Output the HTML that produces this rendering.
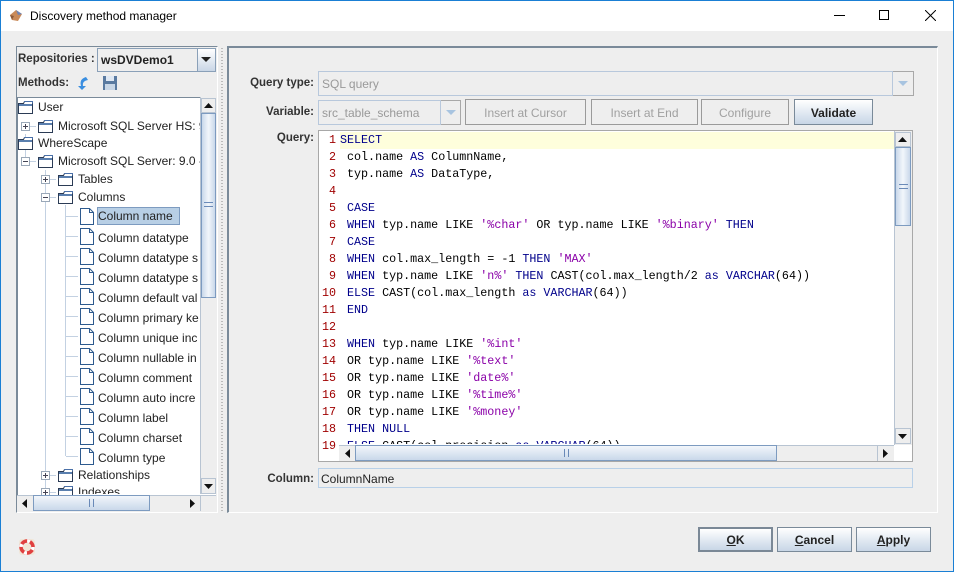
<!DOCTYPE html>
<html><head><meta charset="utf-8"><style>
*{box-sizing:border-box;margin:0;padding:0}
body{width:954px;height:572px;background:#eeeeee;font-family:"Liberation Sans",sans-serif;font-size:12px;color:#222;position:relative;overflow:hidden}
.a{position:absolute}
.lbl{position:absolute;font-weight:bold;color:#333;text-align:right;font-size:11.5px}
.btn{position:absolute;border:1px solid #9a9a9a;background:#eeeeee;color:#a0a0a0;font-size:12px;text-align:center;line-height:26px}
.bb{position:absolute;border:1px solid #7a8a99;background:linear-gradient(#ffffff,#dde6f0 60%,#c8d6e6);color:#222;font-weight:bold;text-align:center;font-size:12px}
.t{position:absolute;font-size:12px;color:#222;white-space:nowrap;line-height:16px}
.code{position:absolute;left:340px;font-family:"Liberation Mono",monospace;font-size:11.7px;white-space:pre;line-height:17px;color:#000}
.num{position:absolute;width:22px;text-align:right;left:314px;font-family:"Liberation Mono",monospace;font-size:11.7px;line-height:17px;color:#a00000}
.k{color:#00008b}.s{color:#8a00a8}
.vl{position:absolute;width:1px;background:#c3d1e2}
</style></head><body>
<div class="a" style="left:0;top:0;width:954px;height:572px;border:1px solid #1a7fd4;border-top:none"></div>
<div class="a" style="left:0;top:0;width:954px;height:31px;background:#fff;border:1px solid #1a7fd4;border-bottom:none"></div>
<svg class="a" style="left:8px;top:7px" width="16" height="16" viewBox="0 0 16 16"><path d="M2 8 L8 3 L14 7 L10 14 L4 13Z" fill="#c98a5a"/><path d="M8 3 L14 7 L10 8Z" fill="#6c84b8"/><path d="M2 8 L6 9 L4 13Z" fill="#8c5a3a"/></svg>
<div class="t" style="left:30px;top:8px;color:#000;font-size:12px">Discovery method manager</div>
<div class="a" style="left:834px;top:15px;width:11px;height:1px;background:#000"></div>
<div class="a" style="left:879px;top:10px;width:10px;height:10px;border:1px solid #000"></div>
<svg class="a" style="left:925px;top:10px" width="11" height="11"><path d="M0 0L11 11M11 0L0 11" stroke="#000" stroke-width="1"/></svg>

<div class="a" style="left:16px;top:46px;width:202px;height:467px;border:1px solid #7a8a99;border-right-color:#fff;border-bottom-color:#fff"></div>
<div class="lbl" style="left:18px;top:53px;text-align:left">Repositories :</div>
<div class="a" style="left:97px;top:48px;width:119px;height:24px;border:1px solid #8aa0b8;background:#eeeeee"></div>
<div class="t" style="left:101px;top:52px;font-weight:bold">wsDVDemo1</div>
<div class="a" style="left:197px;top:49px;width:18px;height:22px;background:linear-gradient(#fff,#c9d6e6);border-left:1px solid #8aa0b8"></div>
<svg class="a" style="left:201px;top:57px" width="10" height="6"><path d="M0 0H10L5 5Z" fill="#222"/></svg>
<div class="lbl" style="left:18px;top:77px;text-align:left">Methods:</div>
<svg class="a" style="left:76px;top:75px" width="16" height="16"><path d="M10 2 Q3 4 5 11 L2 11 L6 15 L10 11 L7 11 Q6 6 12 5Z" fill="#3a8ee0"/></svg>
<svg class="a" style="left:102px;top:75px" width="16" height="16"><rect x="1" y="1" width="14" height="14" fill="#5a7aa0"/><rect x="4" y="1" width="8" height="5" fill="#dfe8f3"/><rect x="3" y="9" width="10" height="6" fill="#c8d6e6"/></svg>
<div class="a" style="left:17px;top:97px;width:199px;height:414px;background:#fff;border:1px solid #7a8a99;border-right:none;border-bottom:none"></div>
<div class="vl" style="left:25px;top:134px;height:29px"></div>
<div class="vl" style="left:45px;top:170px;height:325px"></div>
<div class="vl" style="left:65px;top:205px;height:251px"></div>
<svg width="0" height="0" style="position:absolute"><defs>
<g id="fo"><path d="M0.5 3.5h5l1-2h8v12h-14z" fill="#fff" stroke="#2b3b55"/><rect x="1" y="4" width="13" height="2" fill="#5a7fae"/><path d="M6 1.5h8.5v2" fill="none" stroke="#4a70a8"/></g>
<g id="dc"><path d="M0.5 0.5h9l4 4v12h-13z" fill="#fff" stroke="#2d5a8e"/><path d="M9.5 0.5v4h4" fill="none" stroke="#2d5a8e"/></g>
<g id="pl"><rect x="0.5" y="0.5" width="8" height="8" fill="#fff" stroke="#9aa8b8"/><path d="M2 4.5h5M4.5 2v5" stroke="#445"/></g>
<g id="mi"><rect x="0.5" y="0.5" width="8" height="8" fill="#fff" stroke="#9aa8b8"/><path d="M2 4.5h5" stroke="#445"/></g>
</defs></svg>
<svg class="a" style="left:0;top:0" width="220" height="512">
<use href="#fo" x="18" y="100"/><use href="#pl" x="21" y="122"/><use href="#fo" x="38" y="119"/>
<use href="#fo" x="18" y="136"/><use href="#mi" x="21" y="157"/><use href="#fo" x="38" y="154"/>
<use href="#pl" x="41" y="175"/><use href="#fo" x="58" y="172"/>
<use href="#mi" x="41" y="193"/><use href="#fo" x="58" y="190"/>
<use href="#dc" x="80" y="208"/><use href="#dc" x="80" y="228"/><use href="#dc" x="80" y="248"/><use href="#dc" x="80" y="268"/><use href="#dc" x="80" y="288"/><use href="#dc" x="80" y="308"/><use href="#dc" x="80" y="328"/><use href="#dc" x="80" y="348"/><use href="#dc" x="80" y="368"/><use href="#dc" x="80" y="388"/><use href="#dc" x="80" y="408"/><use href="#dc" x="80" y="428"/><use href="#dc" x="80" y="448"/>
<use href="#pl" x="41" y="471"/><use href="#fo" x="58" y="468"/>
<use href="#pl" x="41" y="488"/><use href="#fo" x="58" y="485"/>
<g stroke="#c3d1e2"><path d="M30 126.5h6M30 161.5h6M50 179.5h6M50 197.5h6M50 475.5h6M50 492.5h6M66 216.5h12M66 236.5h12M66 256.5h12M66 276.5h12M66 296.5h12M66 316.5h12M66 336.5h12M66 356.5h12M66 376.5h12M66 396.5h12M66 416.5h12M66 436.5h12M66 456.5h12"/></g>
</svg>
<div class="t" style="left:38px;top:99px">User</div>
<div class="t" style="left:58px;top:118px;width:142px;overflow:hidden">Microsoft SQL Server HS: 9</div>
<div class="t" style="left:38px;top:135px">WhereScape</div>
<div class="t" style="left:58px;top:153px;width:142px;overflow:hidden">Microsoft SQL Server: 9.0 - </div>
<div class="t" style="left:78px;top:171px">Tables</div>
<div class="t" style="left:78px;top:189px">Columns</div>
<div class="a" style="left:97px;top:207px;width:83px;height:18px;background:#b8cfe5;border:1px solid #7d9bc0"></div>
<div class="t" style="left:98px;top:208px">Column name</div>
<div style="position:absolute;left:98px;top:228px;width:102px;overflow:hidden;line-height:20px;white-space:nowrap;font-size:12px;color:#222">Column datatype<br>Column datatype s<br>Column datatype s<br>Column default val<br>Column primary ke<br>Column unique inc<br>Column nullable in<br>Column comment<br>Column auto incre<br>Column label<br>Column charset<br>Column type</div>
<div class="t" style="left:78px;top:467px">Relationships</div>
<div class="t" style="left:78px;top:484px;height:10px;overflow:hidden">Indexes</div>
<div class="a" style="left:200px;top:97px;width:16px;height:397px;background:#eeeeee;border-left:1px solid #b8c4d2"></div>
<div class="a" style="left:201px;top:98px;width:15px;height:15px;background:#eee;border:1px solid #b8c4d2"></div>
<svg class="a" style="left:204px;top:103px" width="9" height="5"><path d="M0 5H9L4.5 0Z" fill="#111"/></svg>
<div class="a" style="left:201px;top:113px;width:15px;height:185px;background:linear-gradient(90deg,#c9d8ea,#f2f6fb 50%,#c9d8ea);border:1px solid #7d9bc0"></div>
<div class="a" style="left:204px;top:202px;width:9px;height:5px;border-top:1px solid #6a8ab8;border-bottom:1px solid #6a8ab8"></div>
<div class="a" style="left:201px;top:478px;width:15px;height:16px;background:#eee;border:1px solid #b8c4d2"></div>
<svg class="a" style="left:204px;top:484px" width="9" height="5"><path d="M0 0H9L4.5 5Z" fill="#111"/></svg>
<div class="a" style="left:17px;top:495px;width:199px;height:16px;background:#eee;border-top:1px solid #b8c4d2"></div>
<svg class="a" style="left:22px;top:499px" width="6" height="9"><path d="M5 0V9L0 4.5Z" fill="#111"/></svg>
<div class="a" style="left:33px;top:495px;width:117px;height:16px;background:linear-gradient(#f2f6fb,#c9d8ea);border:1px solid #7d9bc0"></div>
<div class="a" style="left:89px;top:499px;width:5px;height:8px;border-left:1px solid #6a8ab8;border-right:1px solid #6a8ab8"></div>
<svg class="a" style="left:190px;top:499px" width="6" height="9"><path d="M0 0V9L5 4.5Z" fill="#111"/></svg>
<div class="a" style="left:200px;top:495px;width:1px;height:16px;background:#b8c4d2"></div>
<div class="a" style="left:221px;top:48px;width:2px;height:463px;background:repeating-linear-gradient(#bbb 0 1px,transparent 1px 3px)"></div>

<div class="a" style="left:227px;top:46px;width:711px;height:467px;border:2px solid #7a8a99;border-right:1px solid #fff;border-bottom:1px solid #fff"></div>
<div class="lbl" style="left:230px;top:77px;width:84px">Query type:</div>
<div class="a" style="left:318px;top:71px;width:596px;height:25px;border:1px solid #a8a8a8;background:#eeeeee"></div>
<div class="a" style="left:318px;top:71px;width:575px;height:25px;border:1px solid #b8c8dc"></div>
<div class="t" style="left:322px;top:76px;color:#999">SQL query</div>
<svg class="a" style="left:898px;top:81px" width="10" height="6"><path d="M0 0H10L5 5Z" fill="#a8c4e0"/></svg>
<div class="lbl" style="left:230px;top:106px;width:84px">Variable:</div>
<div class="a" style="left:318px;top:100px;width:143px;height:25px;border:1px solid #a8a8a8"></div>
<div class="a" style="left:318px;top:100px;width:123px;height:25px;border:1px solid #b8c8dc"></div>
<div class="t" style="left:322px;top:105px;color:#999">src_table_schema</div>
<svg class="a" style="left:446px;top:110px" width="10" height="6"><path d="M0 0H10L5 5Z" fill="#a8c4e0"/></svg>
<div class="btn" style="left:465px;top:99px;width:121px;height:26px">Insert at Cursor</div>
<div class="btn" style="left:591px;top:99px;width:107px;height:26px">Insert at End</div>
<div class="btn" style="left:701px;top:99px;width:88px;height:26px">Configure</div>
<div class="bb" style="left:794px;top:99px;width:79px;height:26px;line-height:26px">Validate</div>
<div class="lbl" style="left:230px;top:132px;width:84px">Query:</div>
<div class="a" style="left:318px;top:130px;width:595px;height:332px;border:1px solid #a8a8a8;background:#fff;overflow:hidden">
  <div class="a" style="left:21px;top:1px;width:554px;height:17px;background:#fefedc"></div>
</div>
<div class="num" style="top:132px">1<br>2<br>3<br>4<br>5<br>6<br>7<br>8<br>9<br>10<br>11<br>12<br>13<br>14<br>15<br>16<br>17<br>18<br>19</div>
<div class="a" style="left:319px;top:131px;width:575px;height:313px;overflow:hidden">
<div class="code" style="left:21px;top:1px"><span class="k">SELECT</span>
 col.name <span class="k">AS</span> ColumnName,
 typ.name <span class="k">AS</span> DataType,

 <span class="k">CASE</span>
 <span class="k">WHEN</span> typ.name LIKE <span class="s">'%char'</span> OR typ.name LIKE <span class="s">'%binary'</span> <span class="k">THEN</span>
 <span class="k">CASE</span>
 <span class="k">WHEN</span> col.max_length = -1 <span class="k">THEN</span> <span class="s">'MAX'</span>
 <span class="k">WHEN</span> typ.name LIKE <span class="s">'n%'</span> <span class="k">THEN</span> CAST(col.max_length/2 <span class="k">as</span> <span class="k">VARCHAR</span>(64))
 <span class="k">ELSE</span> CAST(col.max_length <span class="k">as</span> <span class="k">VARCHAR</span>(64))
 <span class="k">END</span>

 <span class="k">WHEN</span> typ.name LIKE <span class="s">'%int'</span>
 OR typ.name LIKE <span class="s">'%text'</span>
 OR typ.name LIKE <span class="s">'date%'</span>
 OR typ.name LIKE <span class="s">'%time%'</span>
 OR typ.name LIKE <span class="s">'%money'</span>
 <span class="k">THEN</span> <span class="k">NULL</span>
 <span class="k">ELSE</span> CAST(col.precision <span class="k">as</span> <span class="k">VARCHAR</span>(64))</div>
</div>
<div class="a" style="left:894px;top:131px;width:18px;height:314px;background:#eee;border-left:1px solid #b8c4d2"></div>
<div class="a" style="left:895px;top:132px;width:16px;height:15px;background:#eee;border:1px solid #b8c4d2"></div>
<svg class="a" style="left:898px;top:137px" width="9" height="5"><path d="M0 5H9L4.5 0Z" fill="#111"/></svg>
<div class="a" style="left:895px;top:147px;width:16px;height:79px;background:linear-gradient(90deg,#c9d8ea,#f2f6fb 50%,#c9d8ea);border:1px solid #7d9bc0"></div>
<div class="a" style="left:899px;top:184px;width:9px;height:5px;border-top:1px solid #6a8ab8;border-bottom:1px solid #6a8ab8"></div>
<div class="a" style="left:895px;top:428px;width:16px;height:16px;background:#eee;border:1px solid #b8c4d2"></div>
<svg class="a" style="left:898px;top:434px" width="9" height="5"><path d="M0 0H9L4.5 5Z" fill="#111"/></svg>
<div class="a" style="left:339px;top:445px;width:555px;height:16px;background:#eee;border-top:1px solid #b8c4d2"></div>
<svg class="a" style="left:345px;top:449px" width="6" height="9"><path d="M5 0V9L0 4.5Z" fill="#111"/></svg>
<div class="a" style="left:355px;top:445px;width:422px;height:16px;background:linear-gradient(#f2f6fb,#c9d8ea);border:1px solid #7d9bc0"></div>
<div class="a" style="left:564px;top:449px;width:5px;height:8px;border-left:1px solid #6a8ab8;border-right:1px solid #6a8ab8"></div>
<div class="a" style="left:877px;top:445px;width:17px;height:16px;border-left:1px solid #b8c4d2"></div>
<svg class="a" style="left:883px;top:449px" width="6" height="9"><path d="M0 0V9L5 4.5Z" fill="#111"/></svg>
<div class="lbl" style="left:230px;top:473px;width:84px">Column:</div>
<div class="a" style="left:318px;top:468px;width:595px;height:20px;border:1px solid #b8d0e8"></div>
<div class="t" style="left:321px;top:471px">ColumnName</div>

<svg class="a" style="left:19px;top:539px" width="16" height="16"><rect x="0" y="0" width="16" height="16" rx="3" fill="#f0e6d8"/><circle cx="8" cy="8" r="6" fill="none" stroke="#e04040" stroke-width="3.5"/><circle cx="8" cy="8" r="6" fill="none" stroke="#fff" stroke-width="3.5" stroke-dasharray="3 6.4"/></svg>
<div class="bb" style="left:698px;top:527px;width:75px;height:25px;line-height:23px;border:2px solid #7a8896"><u>O</u>K</div>
<div class="bb" style="left:777px;top:527px;width:75px;height:25px;line-height:25px"><u>C</u>ancel</div>
<div class="bb" style="left:856px;top:527px;width:75px;height:25px;line-height:25px"><u>A</u>pply</div>
</body></html>
